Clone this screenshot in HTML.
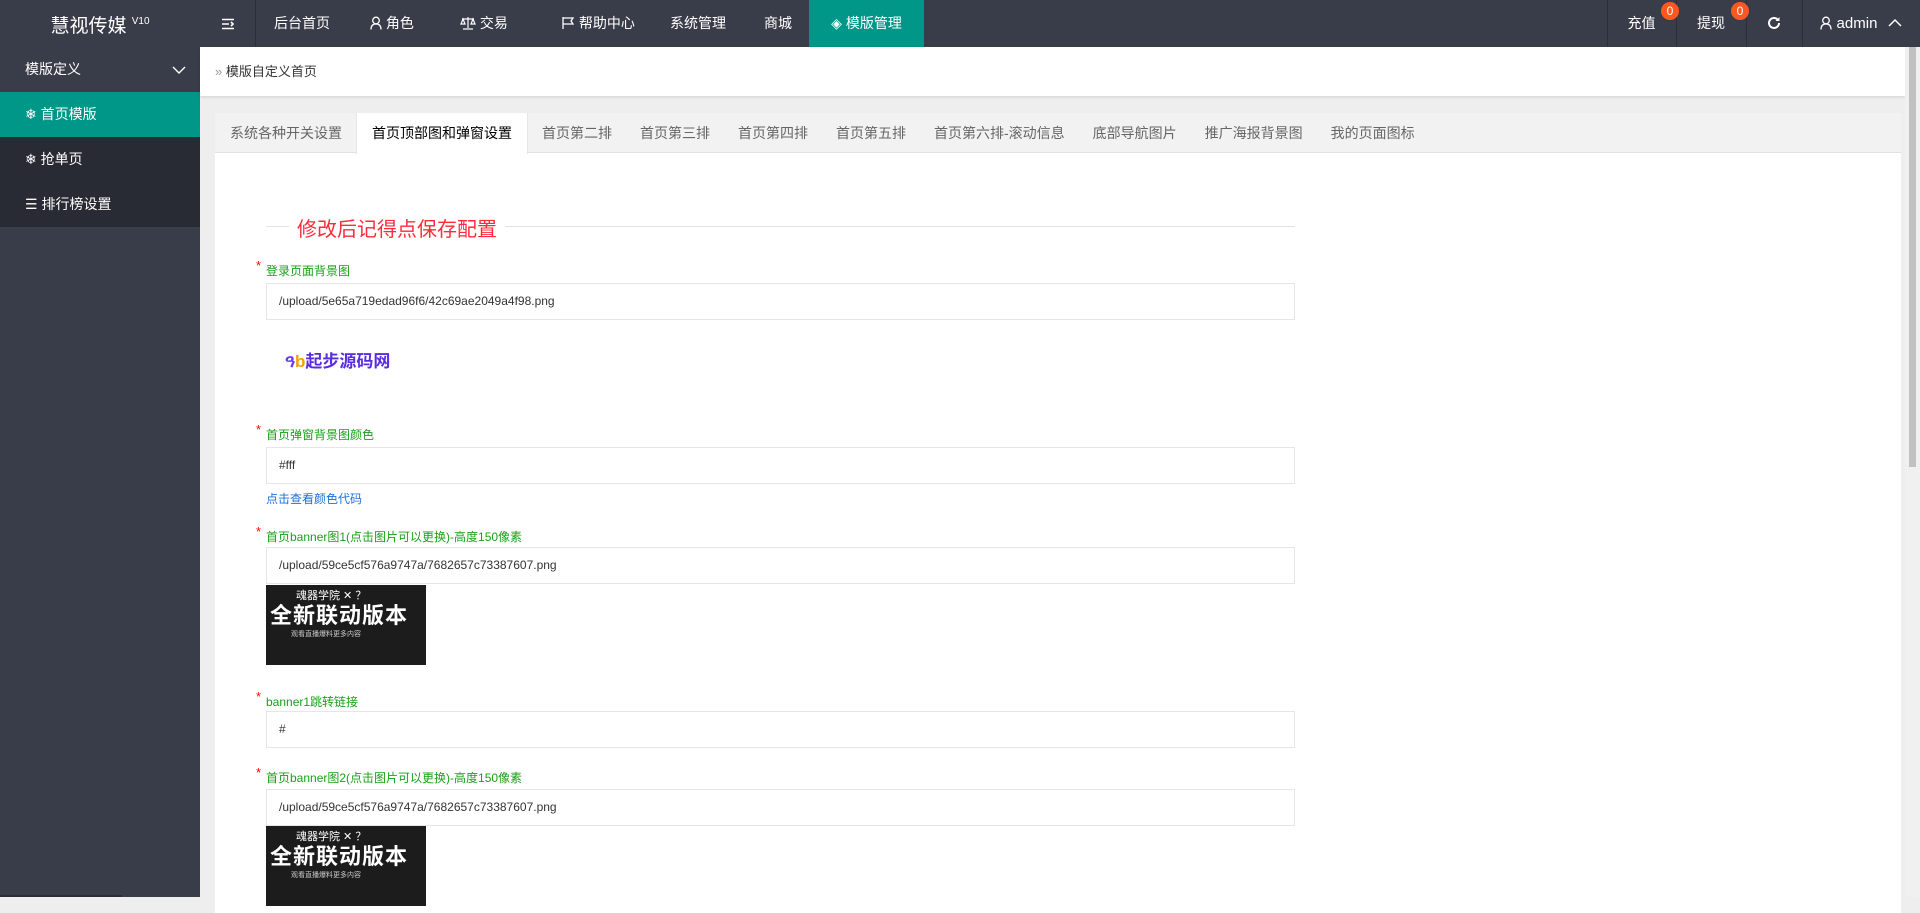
<!DOCTYPE html>
<html><head><meta charset="utf-8"><style>
*{margin:0;padding:0;box-sizing:border-box}
body{width:1920px;height:897px;overflow:hidden;background:#eeeeee;font-family:"Liberation Sans","Noto Sans CJK SC",sans-serif;position:relative}
.top{position:absolute;left:0;top:0;width:1920px;height:47px;background:#393d49;color:#fff;font-size:14px}
.logo{position:absolute;left:0;top:0;width:200px;height:47px;line-height:44px;text-align:center;font-size:19px;color:#fff}
.logo sup{font-size:10px;vertical-align:8px}
.nav{position:absolute;top:0;height:47px;line-height:47px;text-align:center;color:#fff;white-space:nowrap}
.nav svg{vertical-align:-2px}
.sep{position:absolute;top:0;width:1px;height:47px;background:#2b2f38}
.badge{position:absolute;top:2px;width:18px;height:18px;border-radius:9px;background:#ff5722;color:#fff;font-size:12px;line-height:18px;text-align:center}
.side{position:absolute;left:0;top:47px;width:200px;height:850px;background:#393d49}
.si{height:45px;line-height:45px;color:#fff;font-size:14px;padding-left:25px;position:relative}
.crumb{position:absolute;left:200px;top:47px;width:1705px;height:49px;background:#fff;box-shadow:0 1px 3px rgba(0,0,0,.12);font-size:13px;color:#333;line-height:49px;padding-left:15px}
.panel{position:absolute;left:215px;top:113px;width:1686px;height:800px;background:#fff}
.tabs{height:40px;background:#f2f2f2;border-bottom:1px solid #e2e2e2;display:flex;font-size:14px;color:#666}
.tab{padding:0 14px;line-height:40px;white-space:nowrap}
.tab:first-child{padding-left:15px}
.tab.on{background:#fff;color:#000;height:41px;border-right:1px solid #e6e6e6;border-left:1px solid #e6e6e6;padding:0 15px}
.abs{position:absolute}
.lbl{position:absolute;left:51px;font-size:12px;color:#1aa01a}
.lbl b{position:absolute;left:-10px;top:-4px;color:#ff0000;font-weight:normal;font-size:13px}
.inp{position:absolute;left:51px;width:1029px;height:37px;border:1px solid #e6e6e6;font-size:12px;color:#333;line-height:35px;padding-left:12px}
.ban{position:absolute;left:51px;width:160px;height:80px;background:#1c1c1c;overflow:hidden;color:#fff}
.scroll{position:absolute;right:0;top:47px;width:15px;height:850px;background:#f0f0f0}
</style></head><body>
<div class="top">
<div class="logo">慧视传媒 <sup>V10</sup></div>
<div class="sep" style="left:255px"></div>
<div class="nav" style="left:200px;width:55px">
<svg width="14" height="12" viewBox="0 0 14 12"><path d="M1 1.5h12M1 6h7M10 4l2 2-2 2M1 10.5h12" stroke="#fff" stroke-width="1.6" fill="none"/></svg></div>
<div class="nav" style="left:256px;width:92px">后台首页</div>
<div class="nav" style="left:362px;width:60px"><svg width="12" height="14" viewBox="0 0 12 14"><circle cx="6" cy="4.5" r="3.3" stroke="#fff" stroke-width="1.3" fill="none"/><path d="M1 13.5c0-4 2-5.5 5-5.5s5 1.5 5 5.5" stroke="#fff" stroke-width="1.3" fill="none"/></svg> 角色</div>
<div class="nav" style="left:454px;width:60px"><svg width="16" height="14" viewBox="0 0 16 14"><path d="M8 1v11M3 13h10M2 3h12M3 3l-2 5h4zM13 3l-2 5h4z" stroke="#fff" stroke-width="1.2" fill="none"/></svg> 交易</div>
<div class="nav" style="left:546px;width:104px"><svg width="14" height="14" viewBox="0 0 14 14"><path d="M2 1v12M2 2h10l-2 3 2 3H2" stroke="#fff" stroke-width="1.3" fill="none"/></svg> 帮助中心</div>
<div class="nav" style="left:650px;width:96px">系统管理</div>
<div class="nav" style="left:746px;width:64px">商城</div>
<div class="nav" style="left:809px;width:115px;background:#009688">◈ 模版管理</div>
<div class="sep" style="left:1607px"></div><div class="sep" style="left:1676px"></div><div class="sep" style="left:1746px"></div><div class="sep" style="left:1802px"></div>
<div class="nav" style="left:1607px;width:69px">充值</div><div class="badge" style="left:1661px">0</div>
<div class="nav" style="left:1676px;width:70px">提现</div><div class="badge" style="left:1731px">0</div>
<div class="nav" style="left:1746px;width:56px"><svg width="14" height="14" viewBox="0 0 14 14"><path d="M12 7a5 5 0 1 1-1.5-3.6" stroke="#fff" stroke-width="2" fill="none"/><path d="M12.5 1v4h-4z" fill="#fff"/></svg></div>
<div class="nav" style="left:1802px;width:118px;font-size:15px">
<svg width="12" height="14" viewBox="0 0 12 14"><circle cx="6" cy="4.5" r="3.3" stroke="#fff" stroke-width="1.3" fill="none"/><path d="M1 13.5c0-4 2-5.5 5-5.5s5 1.5 5 5.5" stroke="#fff" stroke-width="1.3" fill="none"/></svg> admin
<svg width="14" height="9" viewBox="0 0 14 9" style="margin-left:6px;vertical-align:1px"><path d="M1 8l6-6 6 6" stroke="#fff" stroke-width="1.5" fill="none"/></svg></div>
</div>
<div class="side">
<div class="si" style="background:#393d49">模版定义<svg width="14" height="8" viewBox="0 0 14 8" style="position:absolute;right:14px;top:19px"><path d="M1 1l6 6 6-6" stroke="#fff" stroke-width="1.4" fill="none"/></svg></div>
<div class="si" style="background:#009688">❄ 首页模版</div>
<div class="si" style="background:#282b33">❄ 抢单页</div>
<div class="si" style="background:#282b33">☰ 排行榜设置</div>
<div style="position:absolute;left:0;bottom:0;width:122px;height:2px;background:#2a2d35"></div>
</div>
<div class="crumb"><span style="color:#999">»</span> 模版自定义首页</div>
<div class="panel">
<div class="tabs">
<div class="tab">系统各种开关设置</div><div class="tab on">首页顶部图和弹窗设置</div><div class="tab">首页第二排</div><div class="tab">首页第三排</div><div class="tab">首页第四排</div><div class="tab">首页第五排</div><div class="tab">首页第六排-滚动信息</div><div class="tab">底部导航图片</div><div class="tab">推广海报背景图</div><div class="tab">我的页面图标</div>
</div>
<div class="abs" style="left:51px;top:113px;width:1029px;height:1px;background:#e2e2e2"></div>
<div class="abs" style="left:74px;top:100px;padding:0 8px;background:#fff;font-size:20px;color:#ff2a3a">修改后记得点保存配置</div>
<div class="lbl" style="top:149px"><b>*</b>登录页面背景图</div>
<div class="inp" style="top:170px">/upload/5e65a719edad96f6/42c69ae2049a4f98.png</div>
<div class="abs" style="left:70px;top:234px;font-size:17px;font-weight:bold;color:#5a2be0"><span style="color:#6a3df0">ዓ</span><span style="color:#f5a000">b</span>起步源码网</div>
<div class="lbl" style="top:313px"><b>*</b>首页弹窗背景图颜色</div>
<div class="inp" style="top:334px">#fff</div>
<div class="abs" style="left:51px;top:377px;font-size:12px;color:#1e6fd9">点击查看颜色代码</div>
<div class="lbl" style="top:415px"><b>*</b>首页banner图1(点击图片可以更换)-高度150像素</div>
<div class="inp" style="top:434px">/upload/59ce5cf576a9747a/7682657c73387607.png</div>
<div class="ban" style="top:472px"><div style="font-size:11px;padding:2px 0 0 30px">魂器学院 ✕ ？</div><div style="font-size:22px;font-weight:bold;line-height:26px;padding-left:4px;letter-spacing:1px">全新联动版本</div><div style="font-size:7px;padding-left:25px;color:#ccc">观看直播爆料更多内容</div></div>
<div class="lbl" style="top:580px"><b>*</b>banner1跳转链接</div>
<div class="inp" style="top:598px">#</div>
<div class="lbl" style="top:656px"><b>*</b>首页banner图2(点击图片可以更换)-高度150像素</div>
<div class="inp" style="top:676px">/upload/59ce5cf576a9747a/7682657c73387607.png</div>
<div class="ban" style="top:713px"><div style="font-size:11px;padding:2px 0 0 30px">魂器学院 ✕ ？</div><div style="font-size:22px;font-weight:bold;line-height:26px;padding-left:4px;letter-spacing:1px">全新联动版本</div><div style="font-size:7px;padding-left:25px;color:#ccc">观看直播爆料更多内容</div></div>
</div>
<div class="scroll"><div style="margin:0 4px;width:7px;height:420px;background:#c1c1c1"></div></div>
</body></html>
